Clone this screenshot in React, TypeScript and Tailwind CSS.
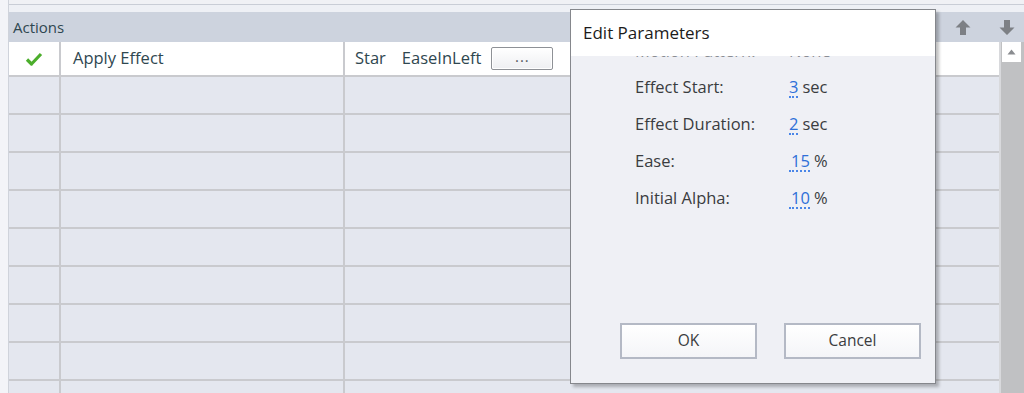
import React from "react";

const font = { fontFamily: '"Open Sans", "Noto Sans", Arial, sans-serif' };

function Check() {
  return (
    <svg width="18" height="16" viewBox="0 0 18 16">
      <path d="M2 8.5 L6.5 13 L16 3" fill="none" stroke="#4cae2c" strokeWidth="3.2" strokeLinejoin="round" />
    </svg>
  );
}

function ArrowUp() {
  return (
    <svg width="16" height="17" viewBox="0 0 16 17">
      <path d="M8 1 L15.5 8.5 L11 8.5 L11 16 L5 16 L5 8.5 L0.5 8.5 Z" fill="#7d8085" />
    </svg>
  );
}

function ArrowDown() {
  return (
    <svg width="16" height="17" viewBox="0 0 16 17">
      <path d="M8 16 L15.5 8.5 L11 8.5 L11 1 L5 1 L5 8.5 L0.5 8.5 Z" fill="#7d8085" />
    </svg>
  );
}

function Row({ first }: { first?: boolean }) {
  return (
    <div
      className={
        "flex shrink-0 border-b-2 border-[#c9cace] " +
        (first ? "h-[35px] bg-white" : "h-[38px] bg-[#e4e7ef]")
      }
    >
      <div className="w-[52px] shrink-0 border-r-2 border-[#c9cace] flex items-center justify-center">
        {first && <Check />}
      </div>
      <div className="w-[284px] shrink-0 border-r-2 border-[#c9cace] flex items-center pl-[12px] text-[16.5px] text-[#2f4750] whitespace-nowrap">
        {first && "Apply Effect"}
      </div>
      <div className="flex-1 flex items-center pl-[10px] text-[16.5px] text-[#2f4750] whitespace-nowrap">
        {first && (
          <>
            <span>Star</span>
            <span className="ml-[16px]">EaseInLeft</span>
            <span className="ml-[10px] w-[62px] h-[23px] border border-[#8e9196] rounded-[2px] bg-gradient-to-b from-white to-[#eeeff2] flex items-center justify-center text-[15px] leading-none pb-[5px] tracking-[1px] text-[#555a60] shadow-[inset_0_0_0_1px_#fff]">
              ...
            </span>
          </>
        )}
      </div>
    </div>
  );
}

function Param({ label, value, unit }: { label: string; value: string; unit: string }) {
  return (
    <div className="h-[37px] flex items-center text-[16.5px] text-[#3a3c40] whitespace-nowrap">
      <div className="w-[218px] shrink-0 pl-[64px]">{label}</div>
      <div className="flex items-baseline">
        <span className={"text-[#2e6fd8] border-b-2 border-dotted border-[#4a86e8] leading-[18px] " + (value.length > 1 ? "pl-[2px]" : "")}>{value}</span>
        <span className="ml-[4px]">{unit}</span>
      </div>
    </div>
  );
}

export default function App() {
  const rows = Array.from({ length: 10 });
  return (
    <div className="w-[1024px] h-[393px] relative overflow-hidden bg-[#eef0f5]" style={font}>
      <div className="flex h-full">
        <div className="w-[9px] shrink-0 border-r border-[#cfd3db] bg-[#f3f4f8]" />
        <div className="flex-1 flex flex-col min-h-0">
          <div className="h-[5px] shrink-0 border-b border-[#c9cdd6] bg-[#f0f1f5]" />
          <div className="h-[7px] shrink-0 bg-[#eef0f5]" />
          <div className="h-[30px] shrink-0 bg-[#cdd3de] flex items-center pl-[4px] text-[15px] text-[#2f4750]">
            <span>Actions</span>
            <div className="ml-auto flex items-center gap-[28px] pr-[9px]">
              <ArrowUp />
              <ArrowDown />
            </div>
          </div>
          <div className="flex-1 flex min-h-0">
            <div className="flex-1 flex flex-col overflow-hidden">
              {rows.map((_, i) => (
                <Row key={i} first={i === 0} />
              ))}
            </div>
            <div className="w-[25px] shrink-0 bg-[#c0c1c3] border-l-2 border-[#d8d9dc] flex flex-col items-center">
              <div className="w-[19px] h-[20px] bg-white flex items-center justify-center ml-[-2px]">
                <svg width="9" height="6" viewBox="0 0 9 6">
                  <path d="M4.5 0.5 L8.5 5.5 L0.5 5.5 Z" fill="#8a8c90" />
                </svg>
              </div>
            </div>
          </div>
        </div>
      </div>

      <div className="absolute left-[570px] top-[9px] w-[366px] h-[375px] border border-[#85878c] bg-[#eff0f5] shadow-[3px_3px_3px_rgba(0,0,0,0.25)] flex flex-col">
        <div className="h-[46px] shrink-0 bg-white flex items-center pl-[12px] text-[17px] text-[#1b1b1b]">
          Edit Parameters
        </div>
        <div className="flex-1 overflow-hidden flex flex-col min-h-0">
          <div className="mt-[-23px]">
            <div className="h-[36px] flex items-center text-[16.5px] text-[#8a8d93] whitespace-nowrap">
              <div className="w-[218px] shrink-0 pl-[64px]">Motion Pattern:</div>
              <div>None</div>
            </div>
            <Param label="Effect Start:" value="3" unit="sec" />
            <Param label="Effect Duration:" value="2" unit="sec" />
            <Param label="Ease:" value="15" unit="%" />
            <Param label="Initial Alpha:" value="10" unit="%" />
          </div>
          <div className="mt-auto mb-[24px] flex pl-[49px] gap-[27px]">
            <div className="w-[137px] h-[36px] border-2 border-[#b4b9c5] bg-gradient-to-b from-white to-[#f4f5f8] flex items-center justify-center text-[15.5px] text-[#3a3c40]">
              OK
            </div>
            <div className="w-[137px] h-[36px] border-2 border-[#b4b9c5] bg-gradient-to-b from-white to-[#f4f5f8] flex items-center justify-center text-[15.5px] text-[#3a3c40]">
              Cancel
            </div>
          </div>
        </div>
      </div>
    </div>
  );
}
